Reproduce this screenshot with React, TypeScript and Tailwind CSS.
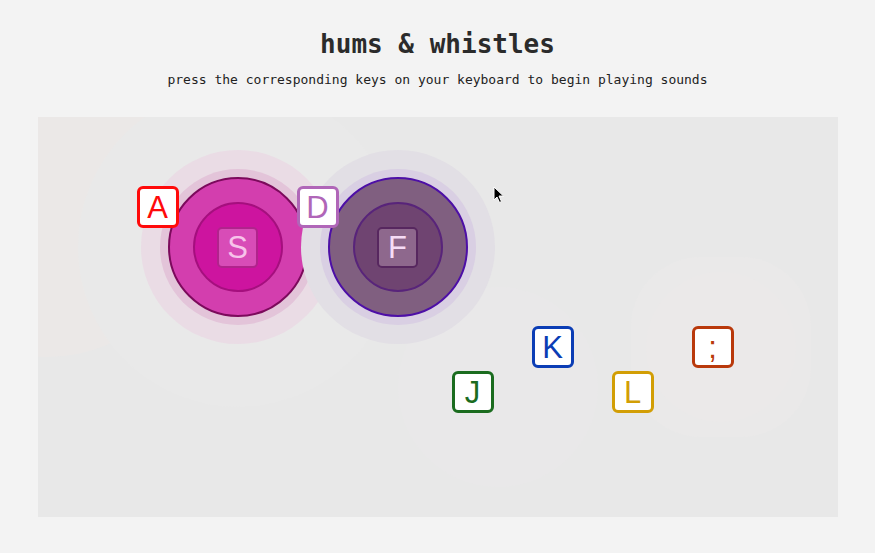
import React from "react";

type Key = { label: string; pos: string; color: string };

// free-floating keys on the canvas (panel coords)
const keys: Key[] = [
  { label: "A", pos: "left-[99px] top-[69px]", color: "border-[#ff0a0a] text-[#ff0a0a]" },
  { label: "D", pos: "left-[259px] top-[69px]", color: "border-[#b066b8] text-[#b066b8]" },
  { label: "J", pos: "left-[414px] top-[254px]", color: "border-[#1b6c1f] text-[#1b6c1f]" },
  { label: "K", pos: "left-[494px] top-[209px]", color: "border-[#0b3db5] text-[#0b3db5]" },
  { label: "L", pos: "left-[574px] top-[254px]", color: "border-[#d29e05] text-[#d29e05]" },
  { label: ";", pos: "left-[654px] top-[209px]", color: "border-[#b9390b] text-[#b9390b]" },
];

function KeyCap({ k }: { k: Key }) {
  return (
    <div
      className={`absolute ${k.pos} ${k.color} z-20 flex h-[42px] w-[42px] items-center justify-center rounded-[6px] border-[3px] bg-white text-[31px] leading-none font-['Liberation_Sans',Arial,sans-serif]`}
    >
      {k.label}
    </div>
  );
}

function ActiveS() {
  return (
    <div className="absolute left-[200px] top-[130px] z-10">
      <div className="absolute -left-[160px] -top-[160px] h-[320px] w-[320px] rounded-full bg-[#e9e9e9]" />
      <div className="absolute -left-[97px] -top-[97px] h-[194px] w-[194px] rounded-full bg-[#eadce5]" />
      <div className="absolute -left-[78px] -top-[78px] h-[156px] w-[156px] rounded-full bg-[#e3c4d9]" />
      <div className="absolute -left-[70px] -top-[70px] flex h-[140px] w-[140px] items-center justify-center rounded-full border-2 border-[#7c0a5c] bg-[#d33eae]">
        <div className="flex h-[90px] w-[90px] items-center justify-center rounded-full border-2 border-[#a50f7e] bg-[#cd149f]">
          <div className="flex h-[41px] w-[41px] items-center justify-center rounded-[5px] border-2 border-[#b1238c] bg-[#d84cb7] text-[31px] leading-none text-[#f7c3ea] font-['Liberation_Sans',Arial,sans-serif]">
            S
          </div>
        </div>
      </div>
    </div>
  );
}

function ActiveF() {
  return (
    <div className="absolute left-[360px] top-[130px] z-10">
      <div className="absolute -left-[97px] -top-[97px] h-[194px] w-[194px] rounded-full bg-[#e2dfe5]" />
      <div className="absolute -left-[78px] -top-[78px] h-[156px] w-[156px] rounded-full bg-[#d9cfe3]" />
      <div className="absolute -left-[70px] -top-[70px] flex h-[140px] w-[140px] items-center justify-center rounded-full border-2 border-[#4d0fa6] bg-[#805f80]">
        <div className="flex h-[90px] w-[90px] items-center justify-center rounded-full border-2 border-[#58247a] bg-[#6f4471]">
          <div className="flex h-[41px] w-[41px] items-center justify-center rounded-[5px] border-2 border-[#57275f] bg-[#8e688d] text-[31px] leading-none text-[#f6dcf6] font-['Liberation_Sans',Arial,sans-serif]">
            F
          </div>
        </div>
      </div>
    </div>
  );
}

export default function App() {
  return (
    <main className="flex min-h-[553px] w-full flex-col items-center bg-[#f3f3f3] text-[#2b2b2b] font-['DejaVu_Sans_Mono',monospace]">
      <h1 className="mt-[28px] text-[26px] leading-[32px] font-bold">hums &amp; whistles</h1>
      <p className="mt-[12px] text-[13px] leading-[16px] text-[#222]">
        press the corresponding keys on your keyboard to begin playing sounds
      </p>
      <section className="relative mt-[29px] h-[400px] w-[800px] overflow-hidden bg-[#e8e8e8]">
        {/* faint warm afterglow left over from earlier notes */}
        <div className="absolute -left-[140px] -top-[60px] h-[300px] w-[300px] rounded-full bg-[#ebe8e7]" />
        <div className="absolute left-[360px] top-[170px] h-[200px] w-[200px] rounded-full bg-[#e9e8e9]" />
        <div className="absolute left-[593px] top-[140px] h-[180px] w-[180px] rounded-[70px] bg-[#eae9e9]" />
        <div className="absolute left-[608px] top-[155px] h-[150px] w-[150px] rounded-full bg-[#ebe9e9]" />
        <ActiveS />
        <ActiveF />
        {keys.map((k) => (
          <KeyCap key={k.label} k={k} />
        ))}
        <svg className="absolute left-[455px] top-[69px] z-30" width="12" height="18" viewBox="0 0 12 18">
          <path d="M1 1 L1 14 L4 11 L6.5 16.5 L8.5 15.5 L6 10 L10.5 10 Z" fill="#000" stroke="#fff" strokeWidth="1" />
        </svg>
      </section>
    </main>
  );
}
